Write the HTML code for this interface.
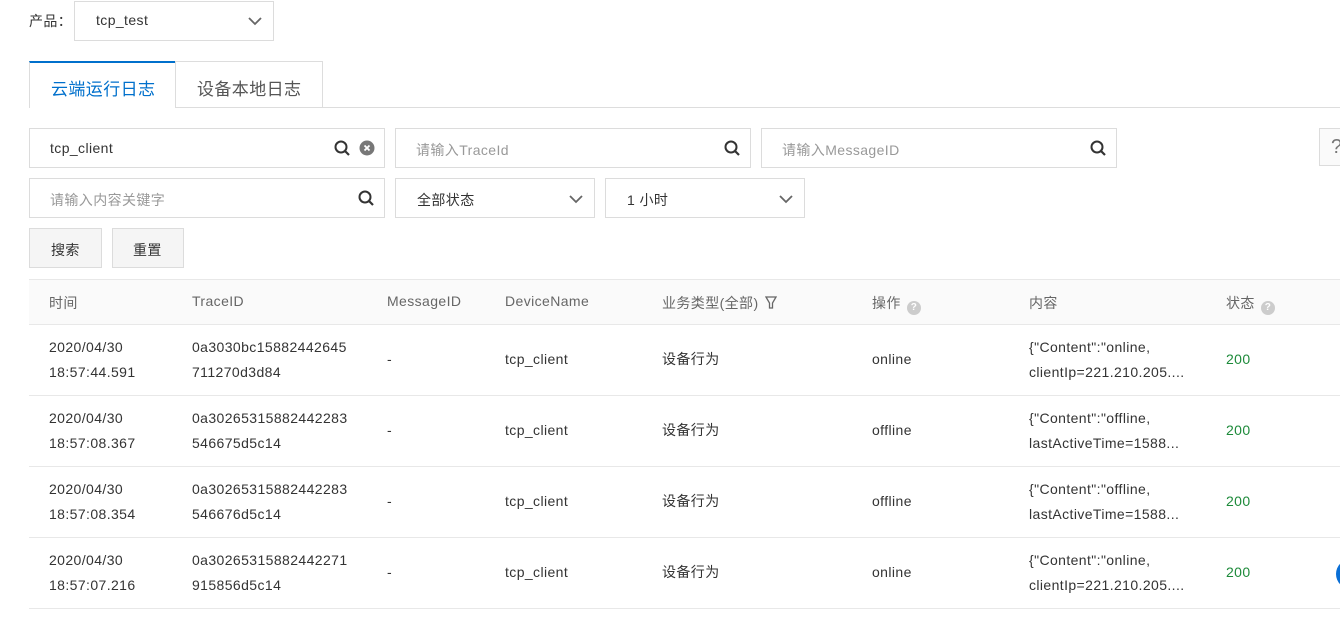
<!DOCTYPE html>
<html><head><meta charset="utf-8"><style>
*{box-sizing:border-box;margin:0;padding:0}
body{width:1340px;height:629px;overflow:hidden;background:#fff;font-family:"Liberation Sans","Noto Sans CJK SC",sans-serif;font-size:14px;color:#333;position:relative;letter-spacing:0.4px}
.a{position:absolute}
.box{position:absolute;border:1px solid #dcdcdc;background:#fff}
.ph{color:#999}
.t{position:absolute;white-space:nowrap}
.hd{color:#666}
.q{display:inline-block;width:14px;height:14px;border-radius:50%;background:#ccc;color:#fff;font-size:10px;text-align:center;line-height:14px;font-weight:bold;vertical-align:-2px;margin-left:6px;letter-spacing:0}
.row{position:absolute;left:29px;width:1311px;height:71px;border-bottom:1px solid #e8e8e8;line-height:25px}
.row .t{top:10px}
.row .m{top:22px}
.g{color:#1d8a3a}
</style></head><body>
<div class="t" style="left:29px;top:11px">产品：</div>
<div class="box" style="left:74px;top:1px;width:200px;height:40px"><span class="t" style="left:21px;top:10px">tcp_test</span>
<svg class="a" style="left:172px;top:13px" width="16" height="12"><path d="M2 3l6 6 6-6" stroke="#666" stroke-width="1.8" fill="none"/></svg></div>

<div class="a" style="left:29px;top:107px;width:1311px;height:1px;background:#ddd"></div>
<div class="a" style="left:29px;top:61px;width:147px;height:47px;border:1px solid #ddd;border-top:2px solid #0070cc;border-bottom:none;background:#fff"><span class="t" style="left:21px;top:12px;font-size:17px;color:#0070cc">云端运行日志</span></div>
<div class="a" style="left:175px;top:61px;width:148px;height:46px;border:1px solid #ddd;border-bottom:none;background:#fff"><span class="t" style="left:21px;top:13px;font-size:17px;color:#555">设备本地日志</span></div>

<svg width="0" height="0" style="position:absolute"><defs><g id="s"><circle cx="7" cy="7" r="5.5" stroke="#333" stroke-width="2" fill="none"/><path d="M11 11l4 4" stroke="#333" stroke-width="2.2"/></g></defs></svg>

<div class="box" style="left:29px;top:128px;width:356px;height:40px"><span class="t" style="left:20px;top:11px">tcp_client</span>
<svg class="a" style="left:304px;top:11px" width="17" height="17"><use href="#s"/></svg>
<svg class="a" style="left:329px;top:11px" width="16" height="16"><circle cx="8" cy="8" r="7.5" fill="#777"/><path d="M5.5 5.5l5 5M10.5 5.5l-5 5" stroke="#fff" stroke-width="1.8"/></svg></div>
<div class="box" style="left:395px;top:128px;width:356px;height:40px"><span class="t ph" style="left:20px;top:11px">请输入TraceId</span>
<svg class="a" style="left:328px;top:11px" width="17" height="17"><use href="#s"/></svg></div>
<div class="box" style="left:761px;top:128px;width:356px;height:40px"><span class="t ph" style="left:20px;top:11px">请输入MessageID</span>
<svg class="a" style="left:328px;top:11px" width="17" height="17"><use href="#s"/></svg></div>
<div class="box" style="left:1319px;top:128px;width:30px;height:38px;background:#fafafa"><span class="t" style="left:11px;top:7px;font-size:20px;color:#777">?</span></div>

<div class="box" style="left:29px;top:178px;width:356px;height:40px"><span class="t ph" style="left:20px;top:11px">请输入内容关键字</span>
<svg class="a" style="left:328px;top:11px" width="17" height="17"><use href="#s"/></svg></div>
<div class="box" style="left:395px;top:178px;width:200px;height:40px"><span class="t" style="left:21px;top:11px">全部状态</span>
<svg class="a" style="left:172px;top:14px" width="16" height="12"><path d="M2 3l6 6 6-6" stroke="#666" stroke-width="1.8" fill="none"/></svg></div>
<div class="box" style="left:605px;top:178px;width:200px;height:40px"><span class="t" style="left:21px;top:11px">1 小时</span>
<svg class="a" style="left:172px;top:14px" width="16" height="12"><path d="M2 3l6 6 6-6" stroke="#666" stroke-width="1.8" fill="none"/></svg></div>

<div class="box" style="left:29px;top:228px;width:73px;height:40px;background:#f5f5f5"><span class="t" style="left:21px;top:11px">搜索</span></div>
<div class="box" style="left:112px;top:228px;width:72px;height:40px;background:#f5f5f5"><span class="t" style="left:20px;top:11px">重置</span></div>

<div class="a" style="left:29px;top:279px;width:1311px;height:46px;background:#fafafa;border-top:1px solid #e8e8e8;border-bottom:1px solid #e8e8e8">
<span class="t hd" style="left:20px;top:13px">时间</span>
<span class="t hd" style="left:163px;top:13px">TraceID</span>
<span class="t hd" style="left:358px;top:13px">MessageID</span>
<span class="t hd" style="left:476px;top:13px">DeviceName</span>
<span class="t hd" style="left:633px;top:13px">业务类型(全部) <svg width="12" height="14" style="vertical-align:-2px;margin-left:2px"><path d="M1 1h10L7.5 7v5h-3V7z" stroke="#666" stroke-width="1.3" fill="none"/></svg></span>
<span class="t hd" style="left:843px;top:13px">操作<span class="q">?</span></span>
<span class="t hd" style="left:1000px;top:13px">内容</span>
<span class="t hd" style="left:1197px;top:13px">状态<span class="q">?</span></span>
</div>

<div class="row" style="top:325px">
<span class="t" style="left:20px">2020/04/30<br>18:57:44.591</span>
<span class="t" style="left:163px">0a3030bc15882442645<br>711270d3d84</span>
<span class="t m" style="left:358px">-</span><span class="t m" style="left:476px">tcp_client</span><span class="t m" style="left:633px">设备行为</span><span class="t m" style="left:843px">online</span>
<span class="t" style="left:1000px">{"Content":"online,<br>clientIp=221.210.205....</span>
<span class="t m g" style="left:1197px">200</span></div>
<div class="row" style="top:396px">
<span class="t" style="left:20px">2020/04/30<br>18:57:08.367</span>
<span class="t" style="left:163px">0a30265315882442283<br>546675d5c14</span>
<span class="t m" style="left:358px">-</span><span class="t m" style="left:476px">tcp_client</span><span class="t m" style="left:633px">设备行为</span><span class="t m" style="left:843px">offline</span>
<span class="t" style="left:1000px">{"Content":"offline,<br>lastActiveTime=1588...</span>
<span class="t m g" style="left:1197px">200</span></div>
<div class="row" style="top:467px">
<span class="t" style="left:20px">2020/04/30<br>18:57:08.354</span>
<span class="t" style="left:163px">0a30265315882442283<br>546676d5c14</span>
<span class="t m" style="left:358px">-</span><span class="t m" style="left:476px">tcp_client</span><span class="t m" style="left:633px">设备行为</span><span class="t m" style="left:843px">offline</span>
<span class="t" style="left:1000px">{"Content":"offline,<br>lastActiveTime=1588...</span>
<span class="t m g" style="left:1197px">200</span></div>
<div class="row" style="top:538px">
<span class="t" style="left:20px">2020/04/30<br>18:57:07.216</span>
<span class="t" style="left:163px">0a30265315882442271<br>915856d5c14</span>
<span class="t m" style="left:358px">-</span><span class="t m" style="left:476px">tcp_client</span><span class="t m" style="left:633px">设备行为</span><span class="t m" style="left:843px">online</span>
<span class="t" style="left:1000px">{"Content":"online,<br>clientIp=221.210.205....</span>
<span class="t m g" style="left:1197px">200</span></div>

<div class="a" style="left:1336px;top:559px;width:30px;height:30px;border-radius:50%;background:#0a6fd6"></div>
</body></html>
